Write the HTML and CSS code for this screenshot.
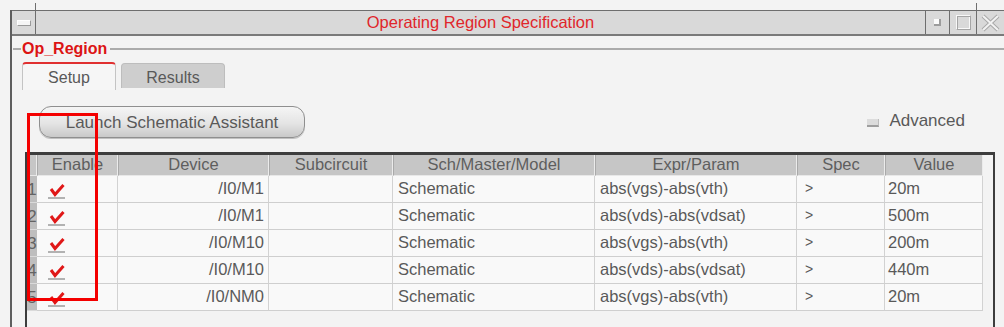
FILE: index.html
```html
<!DOCTYPE html>
<html>
<head>
<meta charset="utf-8">
<title>Operating Region Specification</title>
<link rel="stylesheet" href="styles.css">
</head>
<body>
<div class="screen">
  <div class="window">
    <div class="titlebar">
      <div class="tb-menu"><span class="menu-glyph"></span></div>
      <div class="tb-title">Operating Region Specification</div>
      <div class="tb-btn tb-min"><span class="min-glyph"></span></div>
      <div class="tb-btn tb-max"><span class="max-glyph"></span></div>
      <div class="tb-btn tb-close">
        <svg width="20" height="18" viewBox="0 0 20 18">
          <path d="M2 2 L17 16 M17 2 L2 16" stroke="#a8a8a8" stroke-width="4" fill="none"/>
          <path d="M2 2 L17 16 M17 2 L2 16" stroke="#f2f2f2" stroke-width="2" fill="none"/>
        </svg>
      </div>
    </div>
    <div class="body">
      <div class="group-head">
        <span class="gl-short"></span>
        <span class="group-label">Op_Region</span>
        <span class="gl-long"></span>
      </div>
      <div class="tabs">
        <div class="tab tab-active">Setup</div>
        <div class="tab tab-inactive">Results</div>
      </div>
      <div class="toolbar">
        <button class="launch">Launch Schematic Assistant</button>
        <label class="adv"><span class="cb"></span>Advanced</label>
      </div>
      <div class="table-frame">
        <div class="grid">
          <div class="hd hd-num"></div>
          <div class="hd">Enable</div>
          <div class="hd">Device</div>
          <div class="hd">Subcircuit</div>
          <div class="hd">Sch/Master/Model</div>
          <div class="hd">Expr/Param</div>
          <div class="hd">Spec</div>
          <div class="hd">Value</div>

          <div class="num">1</div>
          <div class="cell en"><svg class="chk" width="18" height="15" viewBox="0 0 18 15"><path d="M0 14 H17" stroke="#9a9a9a" stroke-width="1.5"/><path d="M3 5 L7 10.5 L15.5 1" stroke="#e01818" stroke-width="3" fill="none"/></svg></div>
          <div class="cell dev">/I0/M1</div>
          <div class="cell"></div>
          <div class="cell txt">Schematic</div>
          <div class="cell txt">abs(vgs)-abs(vth)</div>
          <div class="cell spec">&gt;</div>
          <div class="cell val">20m</div>

          <div class="num">2</div>
          <div class="cell en"><svg class="chk" width="18" height="15" viewBox="0 0 18 15"><path d="M0 14 H17" stroke="#9a9a9a" stroke-width="1.5"/><path d="M3 5 L7 10.5 L15.5 1" stroke="#e01818" stroke-width="3" fill="none"/></svg></div>
          <div class="cell dev">/I0/M1</div>
          <div class="cell"></div>
          <div class="cell txt">Schematic</div>
          <div class="cell txt">abs(vds)-abs(vdsat)</div>
          <div class="cell spec">&gt;</div>
          <div class="cell val">500m</div>

          <div class="num">3</div>
          <div class="cell en"><svg class="chk" width="18" height="15" viewBox="0 0 18 15"><path d="M0 14 H17" stroke="#9a9a9a" stroke-width="1.5"/><path d="M3 5 L7 10.5 L15.5 1" stroke="#e01818" stroke-width="3" fill="none"/></svg></div>
          <div class="cell dev">/I0/M10</div>
          <div class="cell"></div>
          <div class="cell txt">Schematic</div>
          <div class="cell txt">abs(vgs)-abs(vth)</div>
          <div class="cell spec">&gt;</div>
          <div class="cell val">200m</div>

          <div class="num">4</div>
          <div class="cell en"><svg class="chk" width="18" height="15" viewBox="0 0 18 15"><path d="M0 14 H17" stroke="#9a9a9a" stroke-width="1.5"/><path d="M3 5 L7 10.5 L15.5 1" stroke="#e01818" stroke-width="3" fill="none"/></svg></div>
          <div class="cell dev">/I0/M10</div>
          <div class="cell"></div>
          <div class="cell txt">Schematic</div>
          <div class="cell txt">abs(vds)-abs(vdsat)</div>
          <div class="cell spec">&gt;</div>
          <div class="cell val">440m</div>

          <div class="num">5</div>
          <div class="cell en"><svg class="chk" width="18" height="15" viewBox="0 0 18 15"><path d="M0 14 H17" stroke="#9a9a9a" stroke-width="1.5"/><path d="M3 5 L7 10.5 L15.5 1" stroke="#e01818" stroke-width="3" fill="none"/></svg></div>
          <div class="cell dev">/I0/NM0</div>
          <div class="cell"></div>
          <div class="cell txt">Schematic</div>
          <div class="cell txt">abs(vgs)-abs(vth)</div>
          <div class="cell spec">&gt;</div>
          <div class="cell val">20m</div>
        </div>
      </div>
    </div>
  </div>
  <div class="highlight"></div>
</div>
</body>
</html>
```

FILE: styles.css
```css
* { box-sizing: border-box; }

html, body {
  margin: 0;
  padding: 0;
}

body {
  width: 1004px;
  height: 327px;
  overflow: hidden;
  background: #f3f3f3;
  font-family: "Liberation Sans", Arial, sans-serif;
  color: #595959;
}

.screen {
  position: relative;
  width: 1004px;
  height: 327px;
  padding: 10px 0 0 10px;
  background: #f3f3f3;
}

.window {
  display: flex;
  flex-direction: column;
  height: 317px;
  border-left: 2px solid #5e5e5e;
}

/* ---------- title bar ---------- */
.titlebar {
  display: flex;
  height: 26px;
  border-top: 1px solid #6e6e6e;
  border-bottom: 2px solid #7a7a7a;
  background: #d9d9d9;
}

.tb-menu {
  position: relative;
  width: 24px;
  border-right: 1px solid #6e6e6e;
  display: flex;
  align-items: center;
  justify-content: center;
}

.tb-menu::before,
.tb-close::before {
  content: "";
  position: absolute;
  left: -1px;
  top: -8px;
  width: 1px;
  height: 8px;
  background: #6e6e6e;
}

.tb-menu::before {
  left: auto;
  right: -1px;
}

.menu-glyph {
  width: 14px;
  height: 6px;
  background: #f6f6f6;
  border: 1px solid #9a9a9a;
  border-top-color: #fff;
  border-left-color: #fff;
}

.tb-title {
  flex: 1;
  text-align: center;
  color: #e0262b;
  font-size: 16.5px;
  line-height: 22px;
}

.tb-btn {
  position: relative;
  border-left: 1px solid #6e6e6e;
  display: flex;
  align-items: center;
  justify-content: center;
}

.tb-min { width: 24px; }
.tb-max { width: 27px; }
.tb-close { width: 28px; }

.min-glyph {
  width: 7px;
  height: 7px;
  background: #fbfbfb;
  border-right: 2px solid #9c9c9c;
  border-bottom: 2px solid #9c9c9c;
}

.max-glyph {
  width: 15px;
  height: 15px;
  border: 1px solid #f8f8f8;
  border-right-color: #a5a5a5;
  border-bottom-color: #a5a5a5;
  box-shadow: inset 1px 1px 0 #a5a5a5, inset -1px -1px 0 #f8f8f8;
}

/* ---------- body ---------- */
.body {
  flex: 1;
  display: flex;
  flex-direction: column;
  min-height: 0;
}

.group-head {
  display: flex;
  align-items: center;
  height: 18px;
  margin-top: 4px;
}

.gl-short {
  width: 8px;
  height: 2px;
  margin-left: 1px;
  background: #ababab;
}

.gl-long {
  flex: 1;
  height: 2px;
  background: #ababab;
}

.group-label {
  padding: 0 3px 0 1px;
  color: #dc1414;
  font-weight: bold;
  font-size: 16px;
  line-height: 18px;
}

.tabs {
  display: flex;
  align-items: flex-start;
  gap: 5px;
  margin: 4px 0 0 10px;
}

.tab {
  font-size: 16px;
  text-align: center;
  border-radius: 4px 4px 0 0;
}

.tab-active {
  width: 94px;
  height: 28px;
  line-height: 27px;
  background: #f6f6f6;
  border: 1px solid #c4c4c4;
  border-top: 2px solid #e03030;
  border-bottom: none;
}

.tab-inactive {
  width: 104px;
  height: 25px;
  margin-top: 1px;
  line-height: 28px;
  background: #cecece;
  border: 1px solid #bdbdbd;
  border-bottom: none;
}

.toolbar {
  display: flex;
  align-items: center;
  justify-content: space-between;
  margin: 16px 39px 0 27px;
}

.launch {
  width: 266px;
  height: 32px;
  padding: 2px 0 0;
  border: 1px solid #8f8f8f;
  border-radius: 12px;
  background: linear-gradient(#f5f5f5, #e4e4e4 55%, #c9c9c9);
  box-shadow: 0 1px 0 #c0c0c0;
  font-family: "Liberation Sans", Arial, sans-serif;
  font-size: 17px;
  color: #595959;
}

.adv {
  display: flex;
  align-items: center;
  font-size: 17px;
  margin-top: -2px;
}

.cb {
  width: 12px;
  height: 8px;
  margin: 3px 10px 0 0;
  background: #dcdcdc;
  border-bottom: 2px solid #9e9e9e;
  border-right: 1px solid #bdbdbd;
}

/* ---------- table ---------- */
.table-frame {
  flex: 1;
  width: 970px;
  margin: 14px 0 0 13px;
  border-left: 2px solid #3d3d3d;
  border-top: 3px solid #3d3d3d;
  border-right: 2px solid #3d3d3d;
  background: #f3f3f3;
}

.grid {
  display: grid;
  grid-template-columns: 10px 81px 151px 124px 202px 202px 88px 98px;
  grid-template-rows: 21px repeat(5, 27px);
  font-size: 16.5px;
  color: #595959;
}

.hd {
  background: #c6c6c6;
  border-right: 1px solid #ebebeb;
  border-left: 1px solid #a9a9a9;
  border-bottom: 1px solid #e8e8e8;
  text-align: center;
  line-height: 19px;
  color: #5e5e5e;
}

.hd-num {
  border-left: none;
}

.num {
  background: #bebebe;
  border-bottom: 1px solid #dadada;
  font-size: 17px;
  line-height: 28px;
  color: #636363;
  text-align: center;
  overflow: hidden;
}

.cell {
  background: #f9f9f9;
  border-right: 1px solid #d2d2d2;
  border-bottom: 1px solid #cfcfcf;
  line-height: 24px;
  white-space: nowrap;
  overflow: hidden;
}

.en {
  padding: 8px 0 0 11px;
}

.chk {
  display: block;
}

.dev {
  text-align: right;
  padding-right: 4px;
}

.txt {
  padding-left: 5px;
}

.spec {
  padding-left: 8px;
  font-size: 14px;
}

.val {
  padding-left: 3px;
}

/* ---------- annotation overlay ---------- */
.highlight {
  position: absolute;
  left: 27px;
  top: 113px;
  width: 71px;
  height: 188px;
  border: 3px solid #f40000;
}
```
